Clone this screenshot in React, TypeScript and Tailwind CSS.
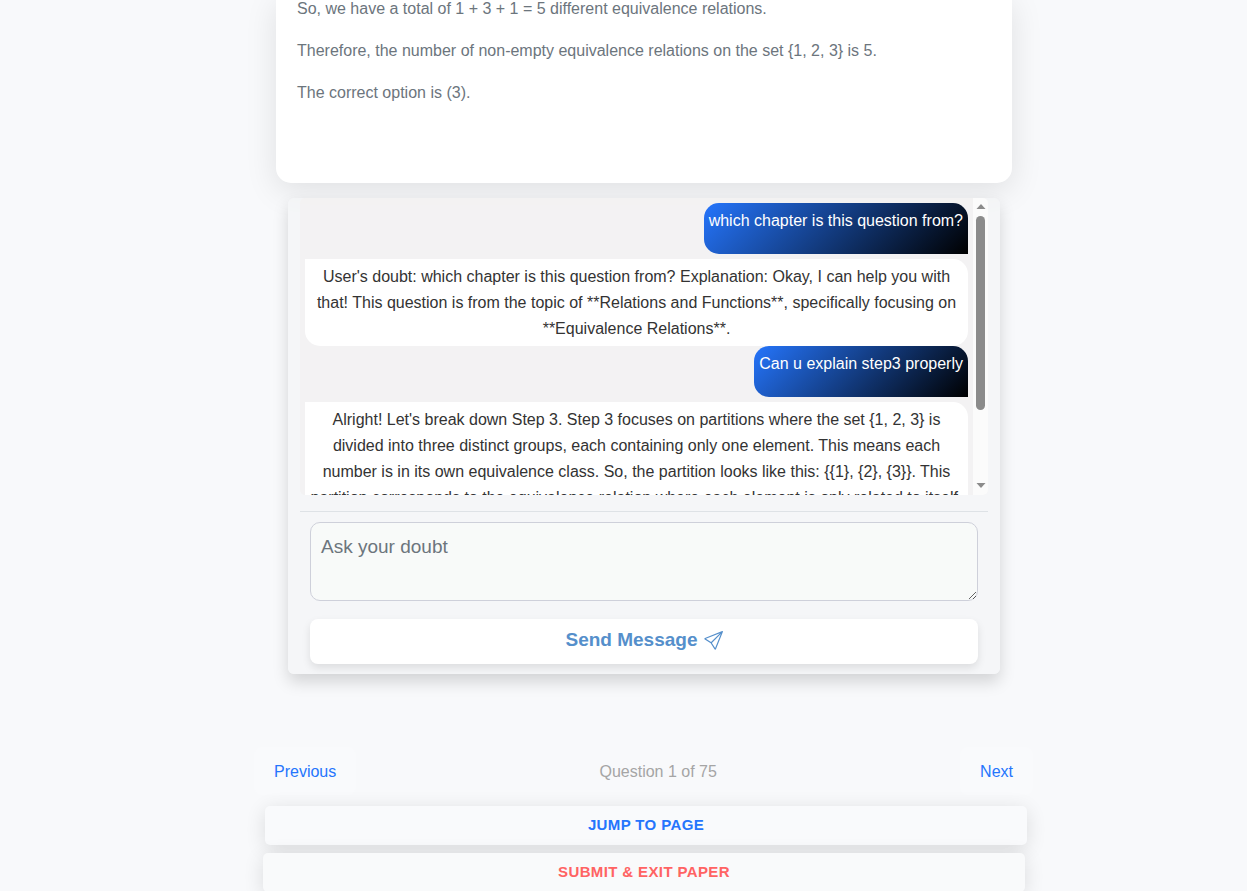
import React, { useState } from 'react';
import { BsSend } from 'react-icons/bs';

interface Message {
    sender: 'user' | 'bot';
    text: string;
}

const solution = [
    'So, we have a total of 1 + 3 + 1 = 5 different equivalence relations.',
    'Therefore, the number of non-empty equivalence relations on the set {1, 2, 3} is 5.',
    'The correct option is (3).',
];

const initialMessages: Message[] = [
    { sender: 'user', text: 'which chapter is this question from?' },
    {
        sender: 'bot',
        text: "User's doubt: which chapter is this question from? Explanation: Okay, I can help you with that! This question is from the topic of **Relations and Functions**, specifically focusing on **Equivalence Relations**.",
    },
    { sender: 'user', text: 'Can u explain step3 properly' },
    {
        sender: 'bot',
        text: "Alright! Let's break down Step 3. Step 3 focuses on partitions where the set {1, 2, 3} is divided into three distinct groups, each containing only one element. This means each number is in its own equivalence class. So, the partition looks like this: {{1}, {2}, {3}}. This partition corresponds to the equivalence relation where each element is only related to itself.",
    },
];

const ChatBubble: React.FC<{ message: Message }> = ({ message }) => {
    if (message.sender === 'user') {
        return (
            <p className="self-end rounded-[15px] rounded-br-none bg-[linear-gradient(135deg,#2575fc,#000)] px-[5px] pt-[5px] pb-5 text-white">
                {message.text}
            </p>
        );
    }
    return (
        <p className="mt-[5px] w-full rounded-[15px] rounded-tl-none bg-white px-[5px] pt-[5px] pb-1 text-center text-[#333]">
            {message.text}
        </p>
    );
};

const ScrollTrack: React.FC = () => (
    <div className="flex w-[15px] shrink-0 flex-col items-center bg-[#fcfcfc]/90" aria-hidden="true">
        <svg className="mt-1 h-[10px] w-[10px]" viewBox="0 0 10 10">
            <path d="M5 2 L9.5 7 H0.5 Z" fill="#8b8b8b" />
        </svg>
        <div className="mt-1 h-[194px] w-[9px] rounded-full bg-[#8b8b8b]" />
        <svg className="mt-auto mb-1 h-[10px] w-[10px]" viewBox="0 0 10 10">
            <path d="M5 7 L9.5 2 H0.5 Z" fill="#8b8b8b" />
        </svg>
    </div>
);

const DoubtChat: React.FC = () => {
    const [messages, setMessages] = useState(initialMessages);
    const [doubt, setDoubt] = useState('');

    const handleSubmit = (e: React.FormEvent) => {
        e.preventDefault();
        if (!doubt.trim()) return;
        setMessages([...messages, { sender: 'user', text: doubt }]);
        setDoubt('');
    };

    return (
        <section className="mx-[38px] mt-[15px] rounded-md bg-[#f4f5f7]/70 px-3 pb-[10px] shadow-[0_8px_16px_rgba(0,0,0,0.15)]">
            <div className="flex h-[297px] overflow-hidden rounded-[5px] bg-[#f2f1f1]/80">
                <div className="flex flex-1 flex-col overflow-hidden p-[5px] leading-[26px]">
                    {messages.map((message, index) => (
                        <ChatBubble key={index} message={message} />
                    ))}
                </div>
                <ScrollTrack />
            </div>

            <form onSubmit={handleSubmit} className="mt-4 border-t border-[#dee2e6] px-[10px] pt-[10px]">
                <textarea
                    aria-label="Ask your doubt"
                    value={doubt}
                    onChange={(e) => setDoubt(e.target.value)}
                    className="block h-[79px] w-full resize rounded-[10px] border border-[#ced0da] bg-[#f8faf9] p-[10px] text-[19px] leading-7 text-[#333] placeholder:text-[#6c757d]"
                    placeholder="Ask your doubt"
                />
                <button
                    type="submit"
                    className="mt-[18px] flex h-[45px] w-full items-center justify-center gap-[6px] rounded-lg bg-white pb-[2px] text-[19px] font-bold text-[#558fcb] shadow-[0_4px_8px_rgba(0,0,0,0.1)]"
                >
                    Send Message
                    <BsSend />
                </button>
            </form>
        </section>
    );
};

export default function App() {
    return (
        <div className="min-h-screen overflow-hidden bg-[#f8f9fb] pl-[41px] font-['Liberation_Sans',Arial,sans-serif] text-base">
            <main className="mx-auto w-full max-w-[788px]">
                <article className="mx-[26px] -mt-1 flex flex-col gap-4 rounded-b-[15px] bg-white px-[21px] pb-[77px] leading-[26px] text-[#6c757d] shadow-[0_8px_32px_rgba(0,0,0,0.1)]">
                    {solution.map((line) => (
                        <p key={line}>{line}</p>
                    ))}
                </article>

                <DoubtChat />

                <nav className="mt-[73px] mr-[5px] ml-1 flex items-center justify-between">
                    <button type="button" className="h-12 rounded-lg bg-[#f9fafc] px-5 pt-[2px] text-[#2575fc]">
                        Previous
                    </button>
                    <span className="pt-[2px] text-[#a5a5a5]">Question 1 of 75</span>
                    <button type="button" className="h-12 rounded-lg bg-[#f9fafc] px-5 pt-[2px] text-[#2575fc]">
                        Next
                    </button>
                </nav>

                <div className="mt-[11px] flex flex-col gap-2">
                    <button
                        type="button"
                        className="mr-[11px] ml-[15px] h-[39px] rounded-[5px] bg-[#f9fafc] pb-px text-[15px] font-bold tracking-wide text-[#2575fc] uppercase shadow-[0_4px_20px_rgba(0,0,0,0.12)]"
                    >
                        Jump to page
                    </button>
                    <button
                        type="button"
                        className="mx-[13px] h-[39px] rounded-[5px] bg-[#f9fafb] pb-px text-[15px] font-bold tracking-wide text-[#ff6363] uppercase shadow-[0_4px_20px_rgba(0,0,0,0.12)]"
                    >
                        Submit &amp; exit paper
                    </button>
                </div>
            </main>
        </div>
    );
}
